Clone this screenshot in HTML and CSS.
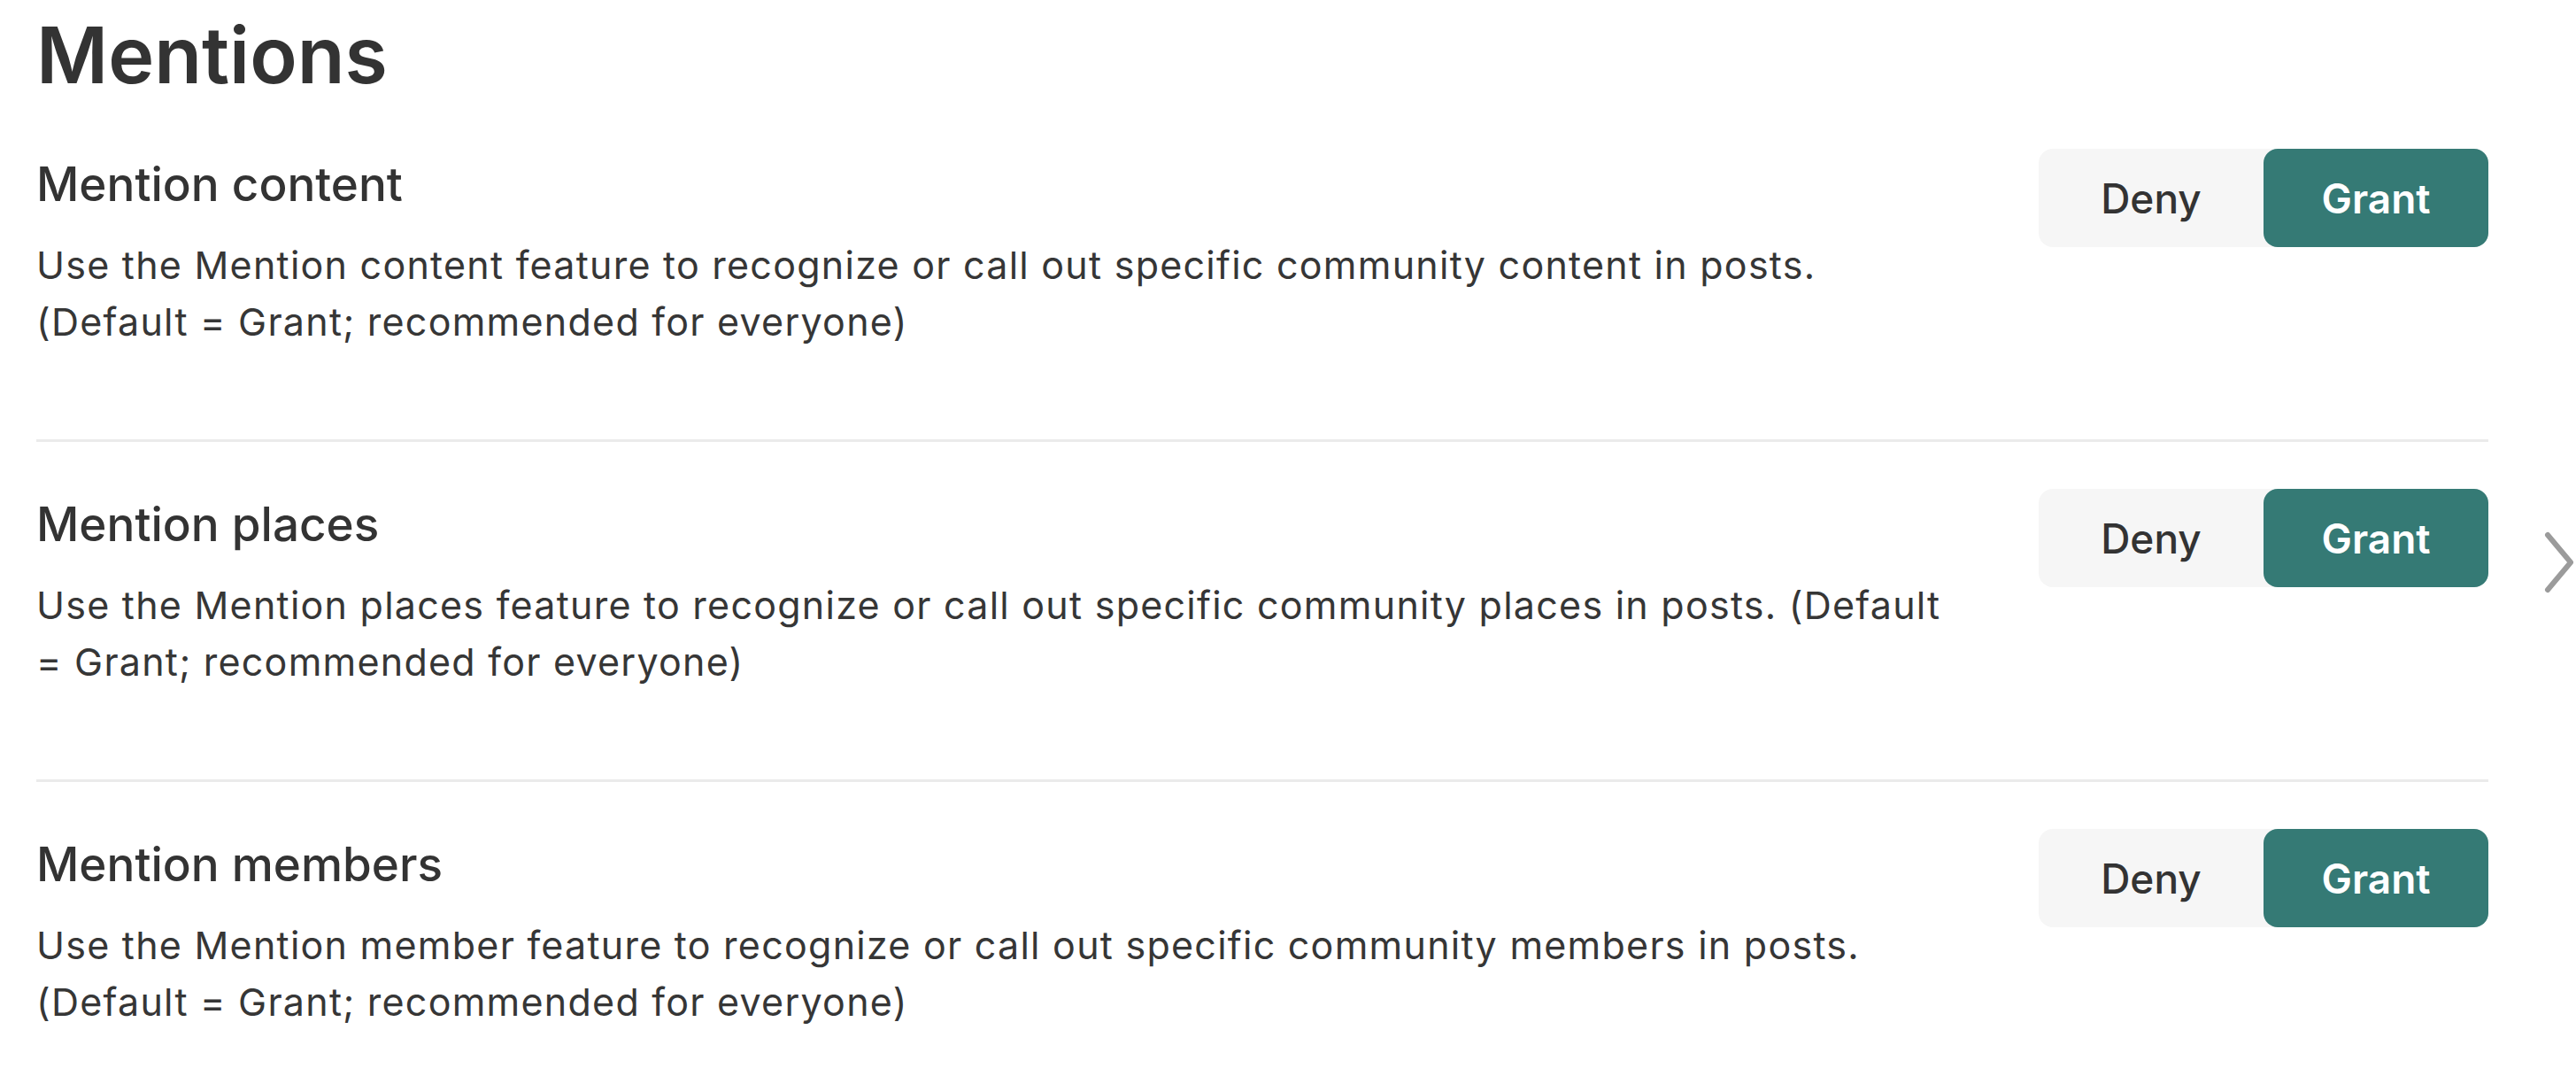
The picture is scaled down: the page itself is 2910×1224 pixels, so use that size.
FILE: index.html
```html
<!DOCTYPE html>
<html lang="en">
<head>
    <meta charset="UTF-8">
    <meta name="viewport" content="width=device-width, initial-scale=1.0">
    <title>Mentions</title>
    <link rel="stylesheet" href="styles.css">
</head>
<body>
    <div class="page">
        <h1>Mentions</h1>

        <div class="setting">
            <div class="setting-text">
                <div class="setting-title">Mention content</div>
                <p class="setting-desc">Use the Mention content feature to recognize or call out specific community content in posts. (Default = Grant; recommended for everyone)</p>
            </div>
            <div class="toggle">
                <button class="toggle-btn">Deny</button>
                <button class="toggle-btn active">Grant</button>
            </div>
        </div>

        <div class="setting">
            <div class="setting-text">
                <div class="setting-title">Mention places</div>
                <p class="setting-desc">Use the Mention places feature to recognize or call out specific community places in posts. (Default = Grant; recommended for everyone)</p>
            </div>
            <div class="toggle">
                <button class="toggle-btn">Deny</button>
                <button class="toggle-btn active">Grant</button>
            </div>
        </div>

        <div class="setting">
            <div class="setting-text">
                <div class="setting-title">Mention members</div>
                <p class="setting-desc">Use the Mention member feature to recognize or call out specific community members in posts. (Default = Grant; recommended for everyone)</p>
            </div>
            <div class="toggle">
                <button class="toggle-btn">Deny</button>
                <button class="toggle-btn active">Grant</button>
            </div>
        </div>

        <!-- carousel arrow -->
        <svg class="next-arrow" width="34" height="70" viewBox="0 0 34 70">
            <polyline points="4,4 30,35 4,66" fill="none" stroke="#9b9b9b" stroke-width="6" stroke-linecap="round" stroke-linejoin="round"/>
        </svg>
    </div>
</body>
</html>
```

FILE: styles.css
```css
body {
    margin: 0;
    background: #ffffff;
    font-family: Inter, "Noto Sans", Arial, sans-serif;
    color: #333333;
    overflow: hidden;
}

.page {
    position: relative;
    width: 2770px;
    padding-left: 41px;
}

h1 {
    margin: 9px 0 0;
    font-size: 88px;
    line-height: 106px;
    font-weight: 600;
}

.setting {
    display: flex;
    justify-content: space-between;
    align-items: flex-start;
    padding: 53px 0 101px;
}

.setting + .setting {
    border-top: 3px solid #ebebeb;
}

.setting-text {
    max-width: 2165px;
    padding-top: 8px;
}

.setting-title {
    font-size: 53px;
    line-height: 64px;
    font-weight: 500;
}

.setting-desc {
    margin: 27px 0 0;
    font-size: 43px;
    line-height: 64px;
    letter-spacing: 1.25px;
    color: #363636;
}

.toggle {
    display: flex;
    flex-shrink: 0;
    background: #f6f6f6;
    border-radius: 16px;
}

.toggle-btn {
    width: 254px;
    height: 111px;
    border: none;
    border-radius: 16px;
    background: transparent;
    font-family: Inter, "Noto Sans", Arial, sans-serif;
    font-size: 46px;
    font-weight: 500;
    color: #333333;
    cursor: pointer;
}

.toggle-btn.active {
    background: #357a75;
    color: #ffffff;
    font-weight: 600;
}

.next-arrow {
    position: absolute;
    left: 2874px;
    top: 591px;
}
```
